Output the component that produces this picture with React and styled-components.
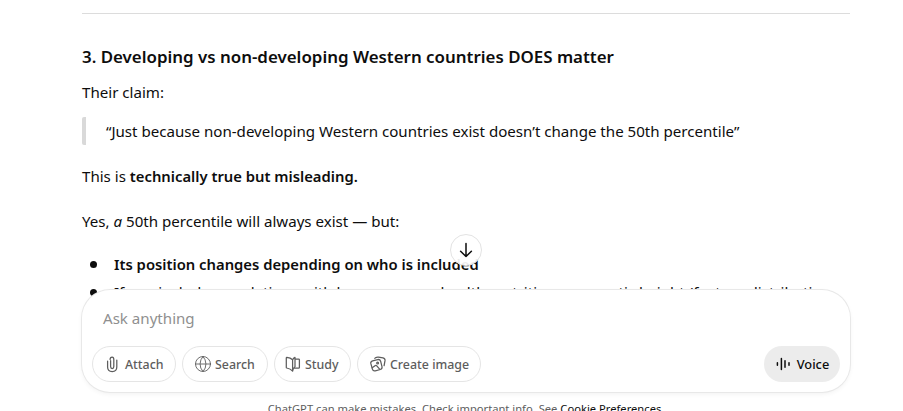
import styled, { createGlobalStyle } from "styled-components";
import { Globe } from "lucide-react";

const GlobalStyle = createGlobalStyle`
  html, body {
    margin: 0;
    height: 100%;
    background: #fff;
    font-family: "Noto Sans", "Open Sans", sans-serif;
    color: #0d0d0d;
  }
  * { box-sizing: border-box; }
`;

function PaperclipIcon() {
  return (
    <svg width="18" height="18" viewBox="0 0 18 18" fill="none" stroke="currentColor" strokeWidth="1.25" strokeLinecap="round">
      <path d="M6.6 5.6v6c0 1.1.7 1.9 1.6 1.9s1.6-.8 1.6-1.9V4.6C9.8 3.1 9.1 2 8.1 2 6.9 2 6.1 3.1 6.1 4.4" />
      <path d="M3.6 6.2v5.8c0 2.7 2 4.5 4.6 4.5s4.6-1.8 4.6-4.5V5" />
    </svg>
  );
}

function BookIcon() {
  return (
    <svg width="18" height="18" viewBox="0 0 18 18" fill="none" stroke="currentColor" strokeWidth="1.25" strokeLinejoin="round">
      <path d="M8.6 4.8C7.4 3.6 5.4 2.6 2.9 2.4c-.4 0-.6.2-.6.6v9.4c0 .3.2.5.5.6 2.4.4 4.4 1.5 5.8 3.2z" />
      <path d="M8.6 4.8c.5-1 1.3-1.9 2.4-2.4v9.4c-1.1.7-2 1.9-2.4 3.8" />
      <path d="M11 4h3.6c.5 0 .8.3.8.8v7.6c0 .5-.3.8-.8.8H10" />
    </svg>
  );
}

function ImagesIcon() {
  return (
    <svg width="18" height="18" viewBox="0 0 18 18" fill="none" stroke="currentColor" strokeWidth="1.25" strokeLinecap="round" strokeLinejoin="round">
      <path d="M1.8 8.4c-.2-1.3.6-2.3 1.8-2.6l5.2-1.2c1.3-.3 2.4.4 2.8 1.6l1.4 5.5c.3 1.3-.4 2.4-1.6 2.8l-5.2 1.3c-1.3.3-2.4-.4-2.8-1.7z" />
      <path d="M3.2 12.8l2.8-2.1c.6-.4 1.3-.3 1.8.2l2.8 3.3" />
      <circle cx="8.6" cy="8" r="0.9" />
      <path d="M5.8 3.4l.7-.6c.9-.6 1.8-.9 2.9-.7l4.6.8c1.3.3 2.2 1.4 2 2.8l-.9 5" />
    </svg>
  );
}

function WaveIcon() {
  return (
    <svg width="18" height="18" viewBox="0 0 18 18" fill="none" stroke="currentColor" strokeWidth="1.5" strokeLinecap="round">
      <path d="M2.4 7.8v2.4M6.4 3.6v10.8M10 5.8v6.4M14 7.8v2.4" />
    </svg>
  );
}

function ArrowDownIcon() {
  return (
    <svg width="18" height="18" viewBox="0 0 18 18" fill="none" stroke="currentColor" strokeWidth="1.5" strokeLinecap="round" strokeLinejoin="round">
      <path d="M9 2.5v13M3.6 10.2 9 15.5l5.4-5.3" />
    </svg>
  );
}

const tools = [
  { label: "Attach", icon: <PaperclipIcon />, width: 84, inset: 11 },
  { label: "Search", icon: <Globe size={18} strokeWidth={1.2} />, width: 86, inset: 11 },
  { label: "Study", icon: <BookIcon />, width: 77, inset: 9 },
  { label: "Create image", icon: <ImagesIcon />, width: 124, inset: 11 },
];

export default function App() {
  return (
    <>
      <GlobalStyle />
      <Page>
        <Article>
          <Divider />
          <Heading>3. Developing vs non-developing Western countries DOES matter</Heading>
          <Paragraph>Their claim:</Paragraph>
          <Quote>“Just because non-developing Western countries exist doesn’t change the 50th percentile”</Quote>
          <Paragraph $gap={17}>
            This is <strong>technically true but misleading.</strong>
          </Paragraph>
          <Paragraph $gap={17}>
            Yes, <em>a</em> 50th percentile will always exist — but:
          </Paragraph>
          <BulletList>
            <li>
              <strong>Its position changes depending on who is included</strong>
            </li>
            <li>If you include populations with lower average health, nutrition, or genetic height (feature distribution</li>
          </BulletList>
        </Article>
        <ScrollButton aria-label="Scroll down">
          <ArrowDownIcon />
        </ScrollButton>
        <Dock>
          <Composer>
            <Prompt>Ask anything</Prompt>
            <Actions>
              <Tools>
                {tools.map((tool) => (
                  <ToolChip key={tool.label} $width={tool.width} $inset={tool.inset}>
                    {tool.icon}
                    {tool.label}
                  </ToolChip>
                ))}
              </Tools>
              <VoiceButton>
                <WaveIcon />
                Voice
              </VoiceButton>
            </Actions>
          </Composer>
          <Disclaimer>
            ChatGPT can make mistakes. Check important info. See <span>Cookie Preferences</span>.
          </Disclaimer>
        </Dock>
      </Page>
    </>
  );
}

const Page = styled.div`
  position: relative;
  height: 100vh;
  overflow: hidden;
  padding: 13px 53px 0 82px;
`;

const Article = styled.main`
  width: 768px;
  font-size: 15.1px;
  line-height: 28px;

  strong {
    font-size: 14.8px;
    font-weight: 600;
  }
`;

const Divider = styled.hr`
  margin: 0;
  border: 0;
  border-top: 1px solid #dcdcdc;
`;

const Heading = styled.h3`
  margin: 29px 0 0;
  font-size: 16.9px;
  line-height: 28px;
  font-weight: 600;
`;

const Paragraph = styled.p`
  margin: ${(p) => p.$gap || 7}px 0 0;
`;

const Quote = styled.blockquote`
  margin: 11px 0 0;
  padding-left: 20px;
  border-left: 4px solid #d9d9d9;
  border-radius: 2px;
`;

const BulletList = styled.ul`
  margin: 15px 0 0;
  padding: 0 0 0 8px;
  list-style: none;

  li {
    display: flex;
    align-items: center;
    gap: 17px;
    white-space: nowrap;
  }

  li::before {
    content: "";
    width: 7px;
    height: 7px;
    flex: none;
    border-radius: 50%;
    background: #0d0d0d;
  }
`;

const ScrollButton = styled.button`
  position: absolute;
  top: 234px;
  left: 450px;
  width: 32px;
  height: 32px;
  padding: 0;
  display: flex;
  align-items: center;
  justify-content: center;
  border: 1px solid #e3e3e3;
  border-radius: 50%;
  background: rgba(255, 255, 255, 0.92);
  color: #0d0d0d;
`;

const Dock = styled.div`
  position: absolute;
  top: 290px;
  left: 82px;
  width: 768px;
`;

const Composer = styled.div`
  height: 102px;
  padding: 0 10px;
  display: flex;
  flex-direction: column;
  background: #fff;
  border-radius: 28px;
  box-shadow: 0 0 0 1px #e8e8e8, 0 2px 5px rgba(0, 0, 0, 0.06);
`;

const Prompt = styled.div`
  height: 56px;
  padding: 16px 0 0 11px;
  font-size: 15.1px;
  line-height: 24px;
  color: #8f8f8f;
`;

const Actions = styled.div`
  display: flex;
  align-items: center;
  justify-content: space-between;
`;

const Tools = styled.div`
  display: flex;
  gap: 6px;
`;

const ToolChip = styled.div`
  width: ${(p) => p.$width}px;
  height: 36px;
  padding-left: ${(p) => p.$inset}px;
  display: flex;
  align-items: center;
  gap: 3px;
  border: 1px solid #e5e5e5;
  border-radius: 18px;
  font-size: 12.4px;
  font-weight: 500;
  color: #5d5d5d;
`;

const VoiceButton = styled.div`
  width: 76px;
  height: 36px;
  display: flex;
  align-items: center;
  justify-content: center;
  gap: 4px;
  border-radius: 18px;
  background: #ececec;
  font-size: 12.8px;
  font-weight: 500;
  color: #0d0d0d;
`;

const Disclaimer = styled.div`
  margin-top: 9px;
  text-align: center;
  font-size: 11.2px;
  line-height: 16px;
  color: #5d5d5d;

  span {
    color: #0d0d0d;
  }
`;
